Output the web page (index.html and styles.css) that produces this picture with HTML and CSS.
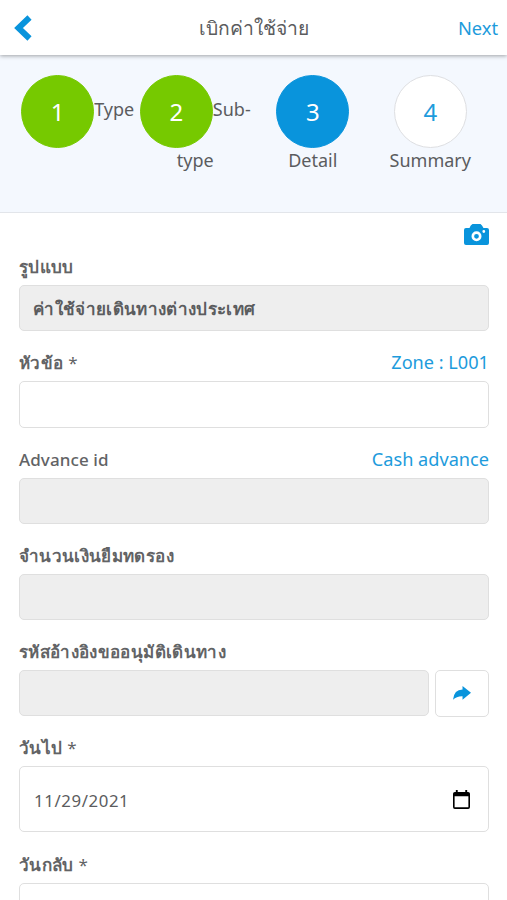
FILE: index.html
```html
<!DOCTYPE html>
<html lang="th">
<head>
<meta charset="utf-8">
<title>เบิกค่าใช้จ่าย</title>
<link rel="stylesheet" href="styles.css">
</head>
<body>
<header class="topbar">
  <svg class="back" viewBox="0 0 18 26"><path d="M15.500 2.500L4.500 13L15.500 23.500" fill="none" stroke="currentColor" stroke-width="6"/></svg>
  <h1>เบิกค่าใช้จ่าย</h1>
  <a class="next">Next</a>
</header>
<nav class="steps">
  <div class="step done"><span class="circle">1</span>Type</div>
  <div class="step done"><span class="circle">2</span>Sub-type</div>
  <div class="step current"><span class="circle">3</span>Detail</div>
  <div class="step"><span class="circle">4</span>Summary</div>
</nav>
<main>
  <div class="tools"><svg class="camera" viewBox="0 0 25 21"><path fill="currentColor" fill-rule="evenodd" d="M2 4H5.500Q6.500 1 8.500 0H16.500Q18 1 19.500 4H23Q25 4 25 6V19Q25 21 23 21H2Q0 21 0 19V6Q0 4 2 4ZM12.500 7.300A5 5 0 1 0 12.500 17.300A5 5 0 1 0 12.500 7.300ZM12.500 9.900A2.400 2.400 0 1 1 12.500 14.700A2.400 2.400 0 1 1 12.500 9.900ZM19.800 6.100A1.400 1.400 0 1 0 19.800 8.900A1.400 1.400 0 1 0 19.800 6.100Z"/></svg></div>
  <section class="field"><div class="label"><b>รูปแบบ</b></div><div class="input off">ค่าใช้จ่ายเดินทางต่างประเทศ</div></section>
  <section class="field"><div class="label"><b>หัวข้อ <i>*</i></b><a>Zone : L001</a></div><div class="input"></div></section>
  <section class="field"><div class="label"><b class="latin">Advance id</b><a>Cash advance</a></div><div class="input off"></div></section>
  <section class="field"><div class="label"><b>จำนวนเงินยืมทดรอง</b></div><div class="input off"></div></section>
  <section class="field"><div class="label"><b>รหัสอ้างอิงขออนุมัติเดินทาง</b></div><div class="row"><div class="input off"></div><div class="input share"><svg viewBox="0 0 17 13"><path fill="currentColor" d="M9 0L17 6.300L9 12.800V9.500Q3.500 9.300 0 12.800Q1 3.300 9 3.200Z"/></svg></div></div></section>
  <section class="field departure"><div class="label"><b>วันไป <i>*</i></b></div><div class="input date"><span>11/29/2021</span><svg viewBox="0 0 18 20"><path fill="currentColor" fill-rule="evenodd" d="M2 2H3V0H5V2H13V0H15V2H16Q18 2 18 4V18Q18 20 16 20H2Q0 20 0 18V4Q0 2 2 2ZM1.700 6.500V18.300H16.300V6.500Z"/></svg></div></section>
  <section class="field"><div class="label"><b>วันกลับ <i>*</i></b></div><div class="input date"></div></section>
</main>
</body>
</html>
```
FILE: styles.css
```css
* { box-sizing: border-box; }
html, body { margin: 0; height: 900px; overflow: hidden; }
body { font-family: "Noto Sans", "Open Sans", sans-serif; font-size: 18px; color: #5b5c5e; background: #fff; display: flex; flex-direction: column; }
a { color: #1d9bdc; }
.topbar { position: relative; flex: none; height: 55px; display: grid; grid-template-columns: 80px 1fr 80px; align-items: center; padding: 0 9px 0 14px; background: #fff; box-shadow: 0 1px 4px rgba(0,0,0,.35); }
.back { width: 18px; height: 26px; color: #0994dc; }
h1 { margin: 0 4px 0 0; font-size: 19.3px; font-weight: 400; text-align: center; line-height: 30px; }
.next { text-align: right; font-size: 18.3px; }
.steps { flex: none; height: 158px; padding: 20px 18px 0 19px; display: grid; grid-template-columns: repeat(4, 117.5px); background: #f4f8fe; border-bottom: 1px solid #e2e5ea; }
.step { text-align: center; line-height: 25px; }
.circle { display: inline-flex; align-items: center; justify-content: center; width: 73px; height: 73px; border-radius: 50%; vertical-align: middle; font-size: 24px; background: #fff; border: 1px solid #dedfe2; color: #1d9bdc; }
.done .circle { background: #76c900; border-color: #76c900; color: #fff; }
.current .circle { background: #0994dc; border-color: #0994dc; color: #fff; }
main { flex: none; padding: 0 18px 0 19px; }
.tools { height: 41px; display: flex; justify-content: flex-end; padding-top: 11px; }
.camera { width: 25px; height: 21px; color: #0994dc; }
.field { height: 96.3px; }
.label { height: 31px; line-height: 26px; display: flex; justify-content: space-between; }
.label b { font-size: 17px; font-weight: 600; color: #626365; letter-spacing: .35px; }
.label i { font-style: normal; font-weight: 400; }
.label .latin { font-weight: 500; letter-spacing: .1px; }
.label a { line-height: 24px; font-size: 18.15px; }
.input { height: 47px; border: 1px solid #dfdfdf; border-radius: 5px; padding: 0 13px; display: flex; align-items: center; font-size: 17px; font-weight: 600; letter-spacing: .33px; background: #fff; }
.off { height: 46px; background: #eee; }
.row { display: flex; gap: 6px; }
.row .off { flex: 1; }
.share { width: 54px; justify-content: center; padding: 0; color: #0994dc; }
.share svg { width: 18px; height: 14px; margin-top: -2px; }
.date { height: 66px; padding: 0 18px 0 14px; justify-content: space-between; font-size: 16.8px; font-weight: 400; letter-spacing: .6px; }
.date span { padding-top: 2px; }
.date svg { width: 17px; height: 19px; color: #000; }
.departure { height: 116.5px; }
```
